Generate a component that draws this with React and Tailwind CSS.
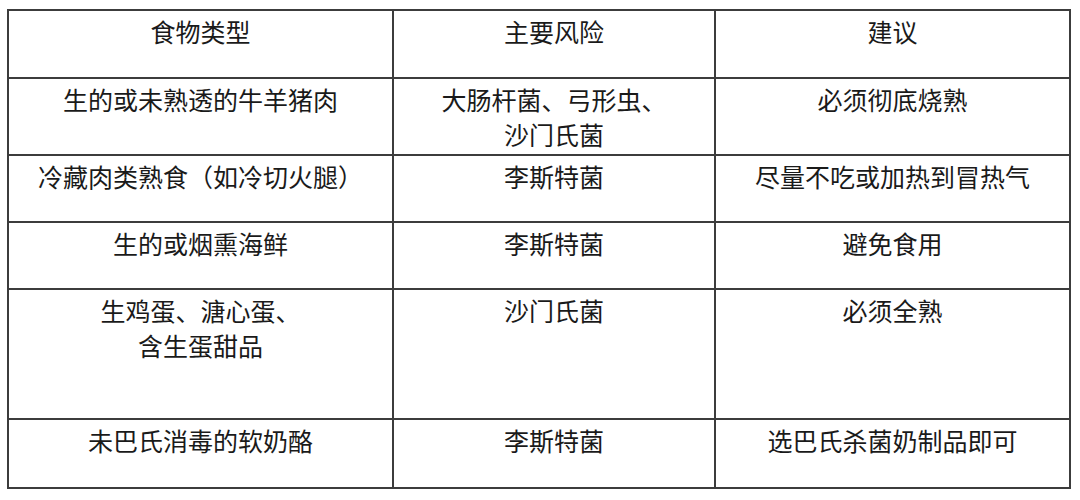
const rows = [
  { h: 'h-[77px]', cells: ['生的或未熟透的牛羊猪肉', ['大肠杆菌、弓形虫、', '沙门氏菌'], '必须彻底烧熟'] },
  { h: 'h-[67px]', cells: ['冷藏肉类熟食（如冷切火腿）', '李斯特菌', '尽量不吃或加热到冒热气'] },
  { h: 'h-[67px]', cells: ['生的或烟熏海鲜', '李斯特菌', '避免食用'] },
  { h: 'h-[130px]', cells: [['生鸡蛋、溏心蛋、', '含生蛋甜品'], '沙门氏菌', '必须全熟'] },
  { h: 'h-[69px]', cells: ['未巴氏消毒的软奶酪', '李斯特菌', '选巴氏杀菌奶制品即可'] },
]

function Cell({ value }) {
  const lines = Array.isArray(value) ? value : [value]
  return (
    <td className="border-2 border-[#3c3c3c] align-top text-center pt-[3px] px-1 whitespace-nowrap">
      {lines.map((l, i) => <div key={i}>{l}</div>)}
    </td>
  )
}

export default function App() {
  return (
    <div className="w-[1080px] h-[500px] bg-white pt-[9px] pl-[7px] font-['Noto_Sans_CJK_SC',sans-serif] text-[25px] leading-[35px] text-[#1a1a1a]">
      <table className="table-fixed border-collapse w-[1062px]">
        <colgroup>
          <col className="w-[385px]" />
          <col className="w-[322px]" />
          <col className="w-[355px]" />
        </colgroup>
        <tbody>
          <tr className="h-[68px]">
            <Cell value="食物类型" />
            <Cell value="主要风险" />
            <Cell value="建议" />
          </tr>
          {rows.map((r, i) => (
            <tr key={i} className={r.h}>
              {r.cells.map((c, j) => <Cell key={j} value={c} />)}
            </tr>
          ))}
        </tbody>
      </table>
    </div>
  )
}
